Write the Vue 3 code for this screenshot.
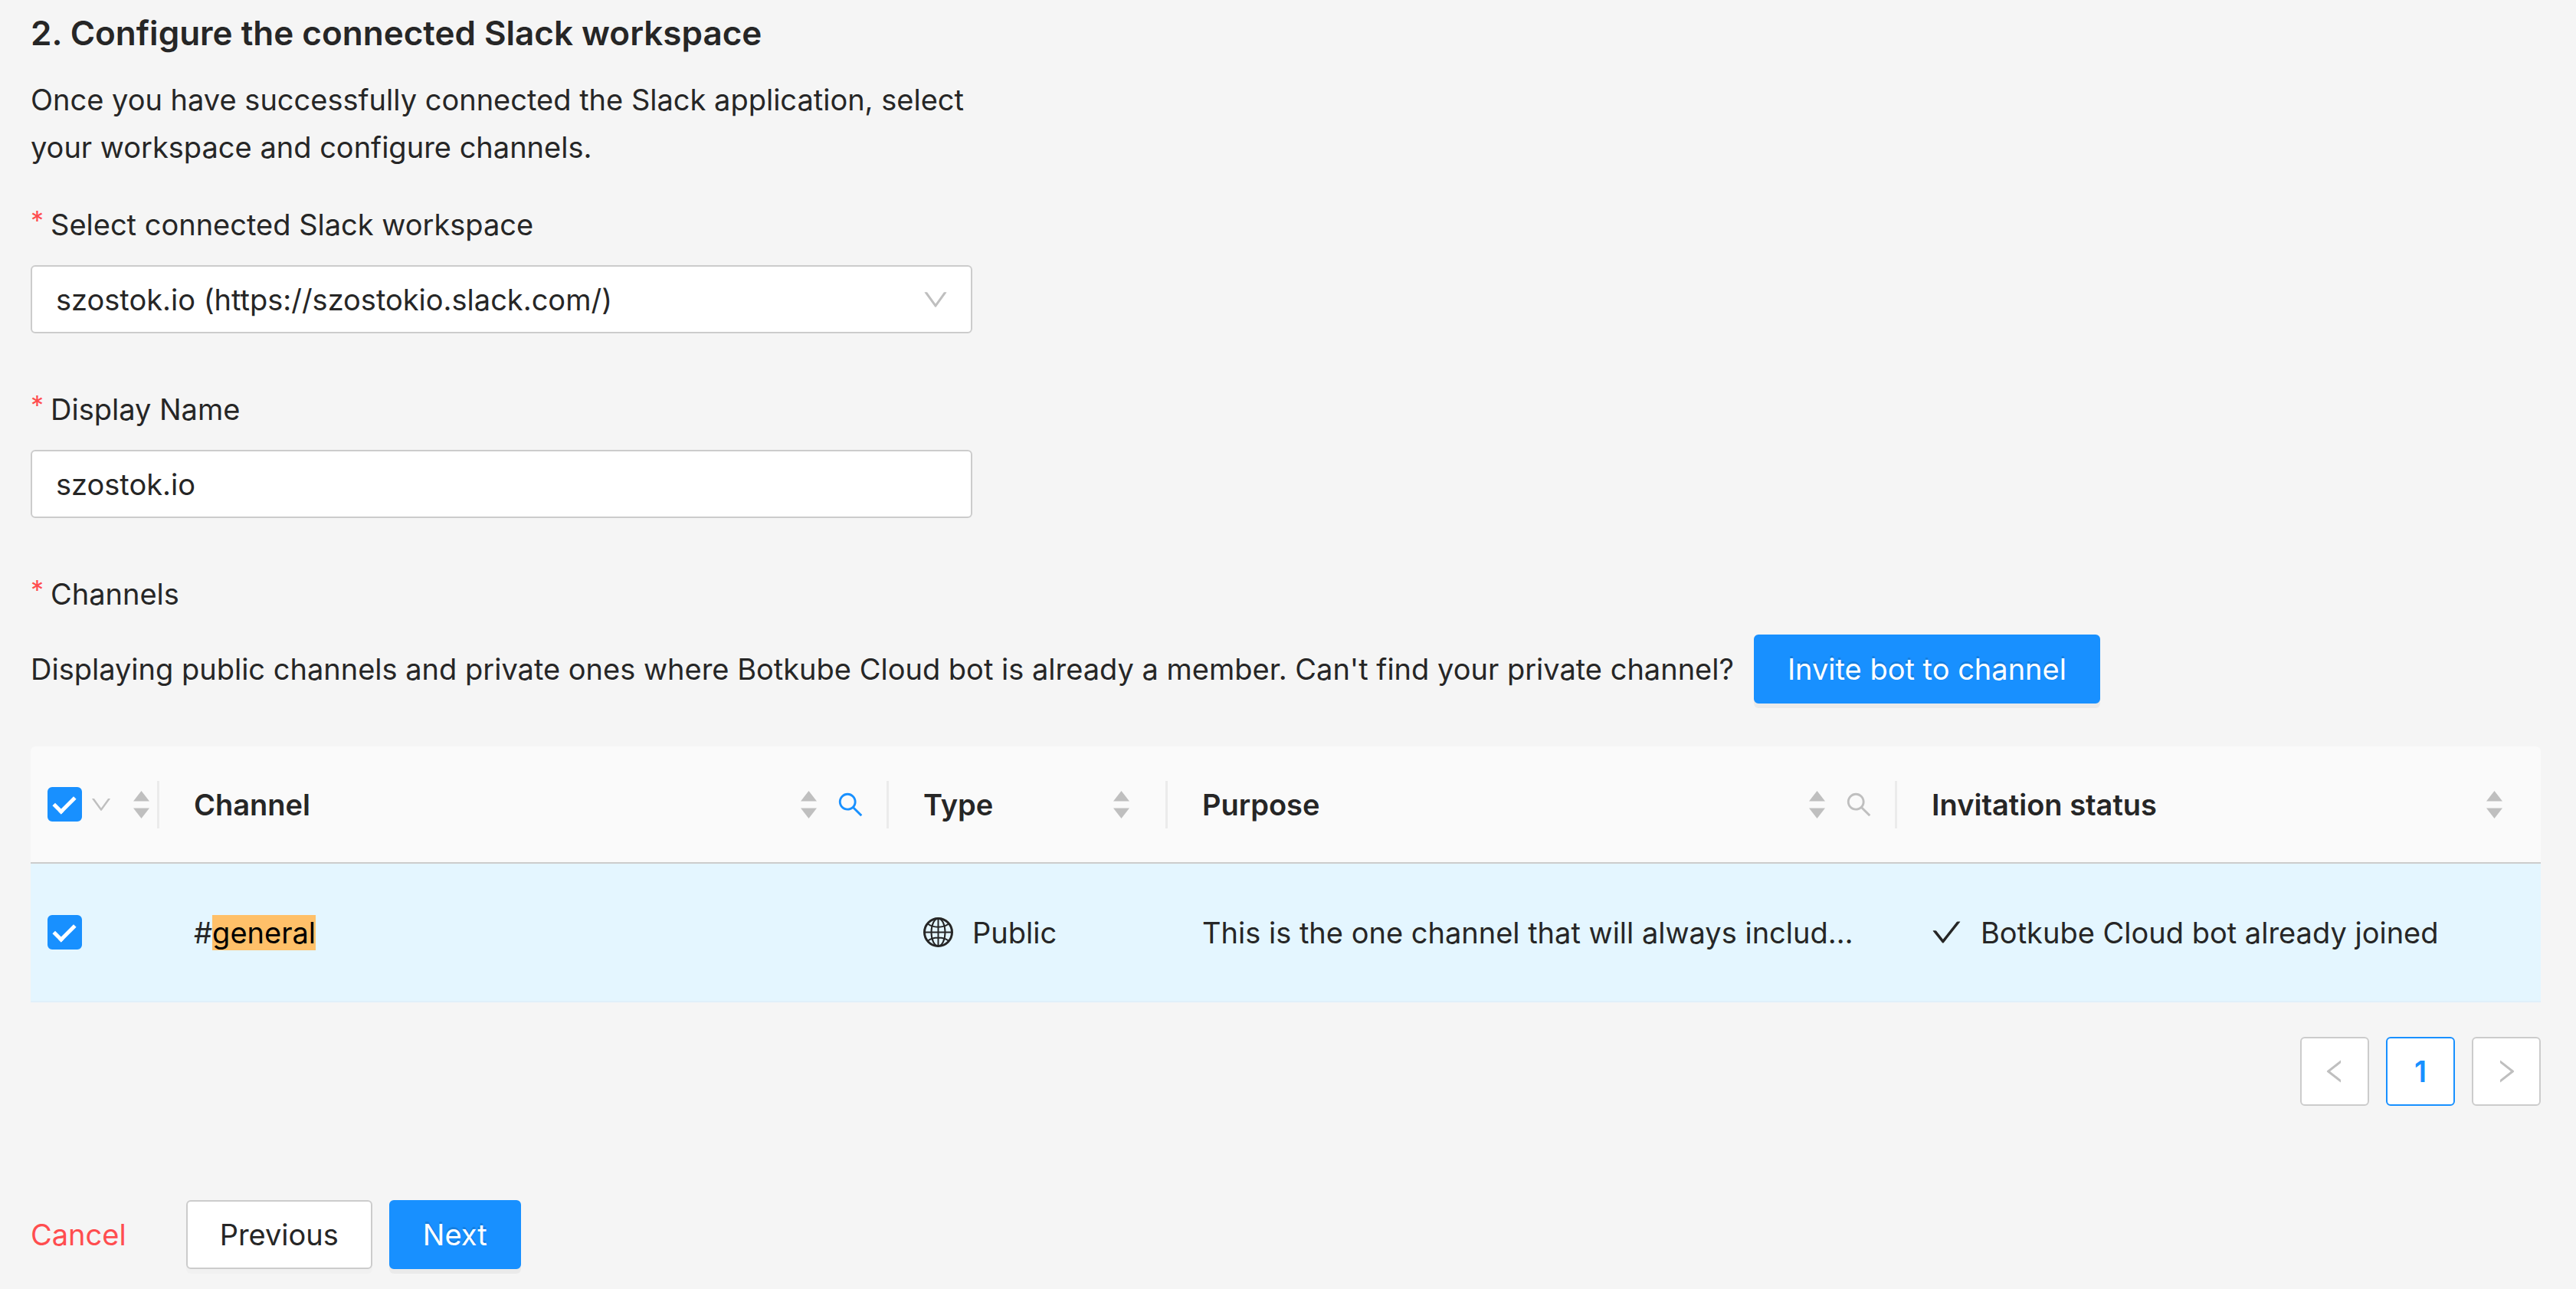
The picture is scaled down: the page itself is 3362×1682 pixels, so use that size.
<script setup>
import { ref } from 'vue'

const workspace = ref('szostok')
const displayName = ref('szostok.io')
const allSelected = ref(true)
const rowSelected = ref(true)

const columns = [
  { title: 'Channel', search: true, active: true },
  { title: 'Type' },
  { title: 'Purpose', search: true },
  { title: 'Invitation status' },
]
</script>

<template>
  <main class="page">
    <h1 class="title">2. Configure the connected Slack workspace</h1>
    <p class="intro">Once you have successfully connected the Slack application, select your workspace and configure channels.</p>

    <div class="field">
      <label class="label" for="workspace"><span class="star">*</span>Select connected Slack workspace</label>
      <div class="select-box">
        <select id="workspace" v-model="workspace" class="control">
          <option value="szostok">szostok.io (https://szostokio.slack.com/)</option>
        </select>
        <svg class="select-arrow" viewBox="64 64 896 896" aria-hidden="true"><path d="M884 256h-75c-5.100 0-9.900 2.500-12.900 6.600L512 654.200 227.900 262.600c-3-4.100-7.800-6.600-12.900-6.600h-75c-6.500 0-10.300 7.400-6.500 12.700l352.600 486.100c12.800 17.600 39 17.600 51.700 0l352.600-486.100c3.900-5.300.1-12.700-6.400-12.700z" /></svg>
      </div>
    </div>

    <div class="field">
      <label class="label" for="display-name"><span class="star">*</span>Display Name</label>
      <input id="display-name" v-model="displayName" class="control" type="text" />
    </div>

    <section class="channels">
      <h2 class="label"><span class="star">*</span>Channels</h2>
      <div class="invite">
        <span>Displaying public channels and private ones where Botkube Cloud bot is already a member. Can't find your private channel?</span>
        <button class="btn primary" type="button">Invite bot to channel</button>
      </div>

      <table class="table">
        <colgroup>
          <col class="col-select" />
          <col />
          <col class="col-type" />
          <col />
          <col class="col-status" />
        </colgroup>
        <thead>
          <tr>
            <th class="select-cell" scope="col">
              <div class="head">
                <div class="select-tools">
                  <input v-model="allSelected" class="tick" type="checkbox" aria-label="Select all channels" />
                  <button class="icon-btn" type="button" aria-label="Selection options">
                    <svg class="small-arrow" viewBox="64 64 896 896"><path d="M884 256h-75c-5.100 0-9.900 2.500-12.900 6.600L512 654.200 227.900 262.600c-3-4.100-7.800-6.600-12.900-6.600h-75c-6.500 0-10.300 7.400-6.500 12.700l352.600 486.100c12.800 17.600 39 17.600 51.700 0l352.600-486.100c3.900-5.300.1-12.700-6.400-12.700z" /></svg>
                  </button>
                </div>
                <button class="icon-btn" type="button" aria-label="Sort by selection">
                  <svg class="sorter" viewBox="0 0 31 36"><path d="M15.500 0 26 13.500H5zM15.500 36 26 22.500H5z" /></svg>
                </button>
              </div>
            </th>
            <th v-for="column in columns" :key="column.title" scope="col">
              <div class="head">
                <span>{{ column.title }}</span>
                <div class="tools">
                  <button class="icon-btn" type="button" :aria-label="`Sort by ${column.title}`">
                    <svg class="sorter" viewBox="0 0 31 36"><path d="M15.500 0 26 13.500H5zM15.500 36 26 22.500H5z" /></svg>
                  </button>
                  <button v-if="column.search" class="icon-btn filter" :class="{ active: column.active }" type="button" :aria-label="`Search ${column.title}`">
                    <svg class="search" viewBox="64 64 896 896"><path d="M909.600 854.500L649.900 594.800C690.200 542.700 712 479 712 412c0-80.200-31.300-155.400-87.900-212.100-56.600-56.700-132-87.900-212.100-87.900s-155.500 31.300-212.100 87.900C143.200 256.500 112 331.800 112 412c0 80.100 31.300 155.500 87.900 212.100C256.500 680.800 331.800 712 412 712c67 0 130.600-21.800 182.700-62l259.700 259.600a8.200 8.200 0 0011.600 0l43.600-43.500a8.200 8.200 0 000-11.600zM570.400 570.400C528 612.700 471.800 636 412 636s-116-23.300-158.400-65.600C211.300 528 188 471.800 188 412s23.300-116.100 65.600-158.400C296 211.300 352.200 188 412 188s116.100 23.200 158.400 65.600S636 352.200 636 412s-23.300 116.100-65.600 158.400z" /></svg>
                  </button>
                </div>
              </div>
            </th>
          </tr>
        </thead>
        <tbody>
          <tr>
            <td class="select-cell"><input v-model="rowSelected" class="tick" type="checkbox" aria-label="Select #general" /></td>
            <td>#<mark>general</mark></td>
            <td>
              <div class="with-icon">
                <svg class="cell-icon" viewBox="0 0 39 39" fill="none" stroke="currentColor" stroke-width="2" aria-hidden="true">
                  <circle cx="19.500" cy="19.500" r="18" stroke-width="3" />
                  <ellipse cx="19.500" cy="19.500" rx="9" ry="18" />
                  <path d="M19.500 1.500v36M1.500 19.500h36M6 8.500c7 5.500 20 5.500 27 0M6 30.500c7-5.500 20-5.500 27 0" />
                </svg>
                <span>Public</span>
              </div>
            </td>
            <td class="purpose">This is the one channel that will always includ…</td>
            <td>
              <div class="with-icon">
                <svg class="cell-icon" viewBox="64 64 896 896" fill="currentColor" aria-hidden="true"><path d="M912 190h-69.900c-9.800 0-19.100 4.500-25.100 12.200L404.700 724.500 207 474a32 32 0 00-25.100-12.200H112c-6.700 0-10.400 7.700-6.300 12.900l273.900 347c12.800 16.200 37.400 16.200 50.300 0l488.400-618.900c4.100-5.100.4-12.800-6.300-12.800z" /></svg>
                <span>Botkube Cloud bot already joined</span>
              </div>
            </td>
          </tr>
        </tbody>
      </table>

      <nav class="pagination" aria-label="Pages">
        <button class="page-btn" type="button" aria-label="Previous page">
          <svg viewBox="64 64 896 896"><path d="M724 218.300V141c0-6.700-7.700-10.400-12.900-6.300L260.300 486.800a31.860 31.860 0 000 50.300l450.800 352.100c5.300 4.100 12.900.4 12.900-6.300v-77.300c0-4.900-2.300-9.600-6.100-12.600l-360-281 360-281.100c3.800-3 6.100-7.700 6.100-12.600z" /></svg>
        </button>
        <button class="page-btn current" type="button" aria-current="page">1</button>
        <button class="page-btn" type="button" aria-label="Next page">
          <svg viewBox="64 64 896 896"><path d="M765.700 486.800L314.900 134.700A7.970 7.970 0 00302 141v77.300c0 4.900 2.300 9.600 6.100 12.600l360 281.100-360 281.100c-3.900 3-6.100 7.700-6.100 12.600V883c0 6.700 7.700 10.400 12.900 6.300l450.800-352.100a31.960 31.960 0 000-50.400z" /></svg>
        </button>
      </nav>
    </section>

    <footer class="actions">
      <button class="btn link" type="button">Cancel</button>
      <button class="btn" type="button">Previous</button>
      <button class="btn primary" type="button">Next</button>
    </footer>
  </main>
</template>

<style>
body {
  background: #f5f5f5;
}
</style>

<style scoped>
.page,
.page * {
  box-sizing: border-box;
}

.page {
  padding: 8px 46px 26px 40px;
  color: #262626;
  font-family: Inter, "Liberation Sans", sans-serif;
  font-size: 38px;
  line-height: 62px;
}

.title {
  margin: 0 0 21px;
  font-size: 44px;
  font-weight: 600;
  line-height: 70px;
}

.intro {
  max-width: 1240px;
  margin: 0 0 39px;
}

.field {
  width: 38%;
  max-width: 1229px;
  margin-bottom: 68px;
}

.label {
  display: block;
  margin: 0 0 22px;
  font-size: 38px;
  font-weight: 400;
  line-height: 62px;
}

.star {
  display: inline-block;
  width: 26px;
  color: #ff4d4f;
  font-size: 34px;
  line-height: 38px;
  vertical-align: 7px;
}

.select-box {
  position: relative;
}

.control {
  display: block;
  width: 100%;
  height: 89px;
  margin: 0;
  padding: 0 31px;
  border: 2px solid #ccc;
  border-radius: 6px;
  background: #fff;
  color: inherit;
  font: inherit;
  appearance: none;
}

.select-arrow {
  position: absolute;
  top: 28px;
  right: 31px;
  width: 34px;
  height: 34px;
  fill: #bfbfbf;
  pointer-events: none;
}

.invite {
  display: flex;
  align-items: center;
  gap: 26px;
  margin-bottom: 56px;
  white-space: nowrap;
}

.btn {
  height: 90px;
  padding: 0 42px;
  border: 2px solid #ccc;
  border-radius: 6px;
  background: #fff;
  box-shadow: 0 6px 0 rgba(0, 0, 0, 0.016);
  color: #262626;
  font: inherit;
}

.btn.primary {
  border-color: #1890ff;
  background: #1890ff;
  box-shadow: 0 6px 0 rgba(0, 0, 0, 0.045);
  color: #fff;
  text-shadow: 0 -3px 0 rgba(0, 0, 0, 0.12);
}

.btn.link {
  margin-right: 56px;
  padding: 0;
  border: 0;
  background: none;
  box-shadow: none;
  color: #ff4d4f;
}

.table {
  width: 100%;
  border-spacing: 0;
  table-layout: fixed;
}

.col-select {
  width: 168px;
}

.col-type {
  width: 364px;
}

.col-status {
  width: 840px;
}

th,
td {
  padding: 0 45px;
  text-align: left;
}

th {
  position: relative;
  height: 153px;
  border-bottom: 2px solid #ccc;
  background: #fafafa;
  font-weight: 600;
}

th:first-child {
  border-top-left-radius: 6px;
}

th:last-child {
  border-top-right-radius: 6px;
}

th:not(:last-child)::after {
  position: absolute;
  top: 45px;
  right: 0;
  width: 3px;
  height: 62px;
  background: #ebebeb;
  content: "";
}

td {
  height: 181px;
  border-bottom: 2px solid #e0effa;
  background: #e4f6ff;
}

.select-cell {
  padding: 0 8px 0 22px;
}

.head,
.tools,
.select-tools,
.with-icon {
  display: flex;
  align-items: center;
}

.head {
  justify-content: space-between;
}

.select-tools {
  gap: 11px;
}

.with-icon {
  gap: 25px;
}

.icon-btn {
  display: flex;
  padding: 0;
  border: 0;
  background: none;
  color: #bfbfbf;
}

.icon-btn svg {
  display: block;
  fill: currentColor;
}

.filter {
  margin: 0 -23px 0 11px;
  padding: 0 11px;
}

.filter.active {
  color: #1890ff;
}

.small-arrow {
  width: 28px;
  height: 28px;
}

.sorter {
  width: 31px;
  height: 36px;
}

.search {
  width: 34px;
  height: 34px;
}

.cell-icon {
  width: 39px;
  height: 39px;
}

.tick {
  display: block;
  width: 45px;
  height: 45px;
  margin: 0;
  border: 2px solid #ccc;
  border-radius: 6px;
  background: #fff;
  appearance: none;
}

.tick:checked {
  border-color: #1890ff;
  background: #1890ff;
}

.tick:checked::after {
  display: block;
  box-sizing: border-box;
  width: 16px;
  height: 28px;
  margin: 4px 0 0 12px;
  border: solid #fff;
  border-width: 0 5px 5px 0;
  transform: rotate(45deg);
  content: "";
}

mark {
  background: #ffc069;
  color: #000;
}

.purpose {
  white-space: nowrap;
}

.pagination {
  display: flex;
  justify-content: flex-end;
  gap: 22px;
  margin-top: 45px;
}

.page-btn {
  display: flex;
  align-items: center;
  justify-content: center;
  width: 90px;
  height: 90px;
  padding: 0;
  border: 2px solid #ccc;
  border-radius: 6px;
  background: #fff;
  font: inherit;
}

.page-btn svg {
  width: 34px;
  height: 34px;
  fill: #bfbfbf;
}

.page-btn.current {
  border-color: #1890ff;
  color: #1890ff;
  font-weight: 600;
}

.actions {
  display: flex;
  gap: 22px;
  margin-top: 123px;
}
</style>
